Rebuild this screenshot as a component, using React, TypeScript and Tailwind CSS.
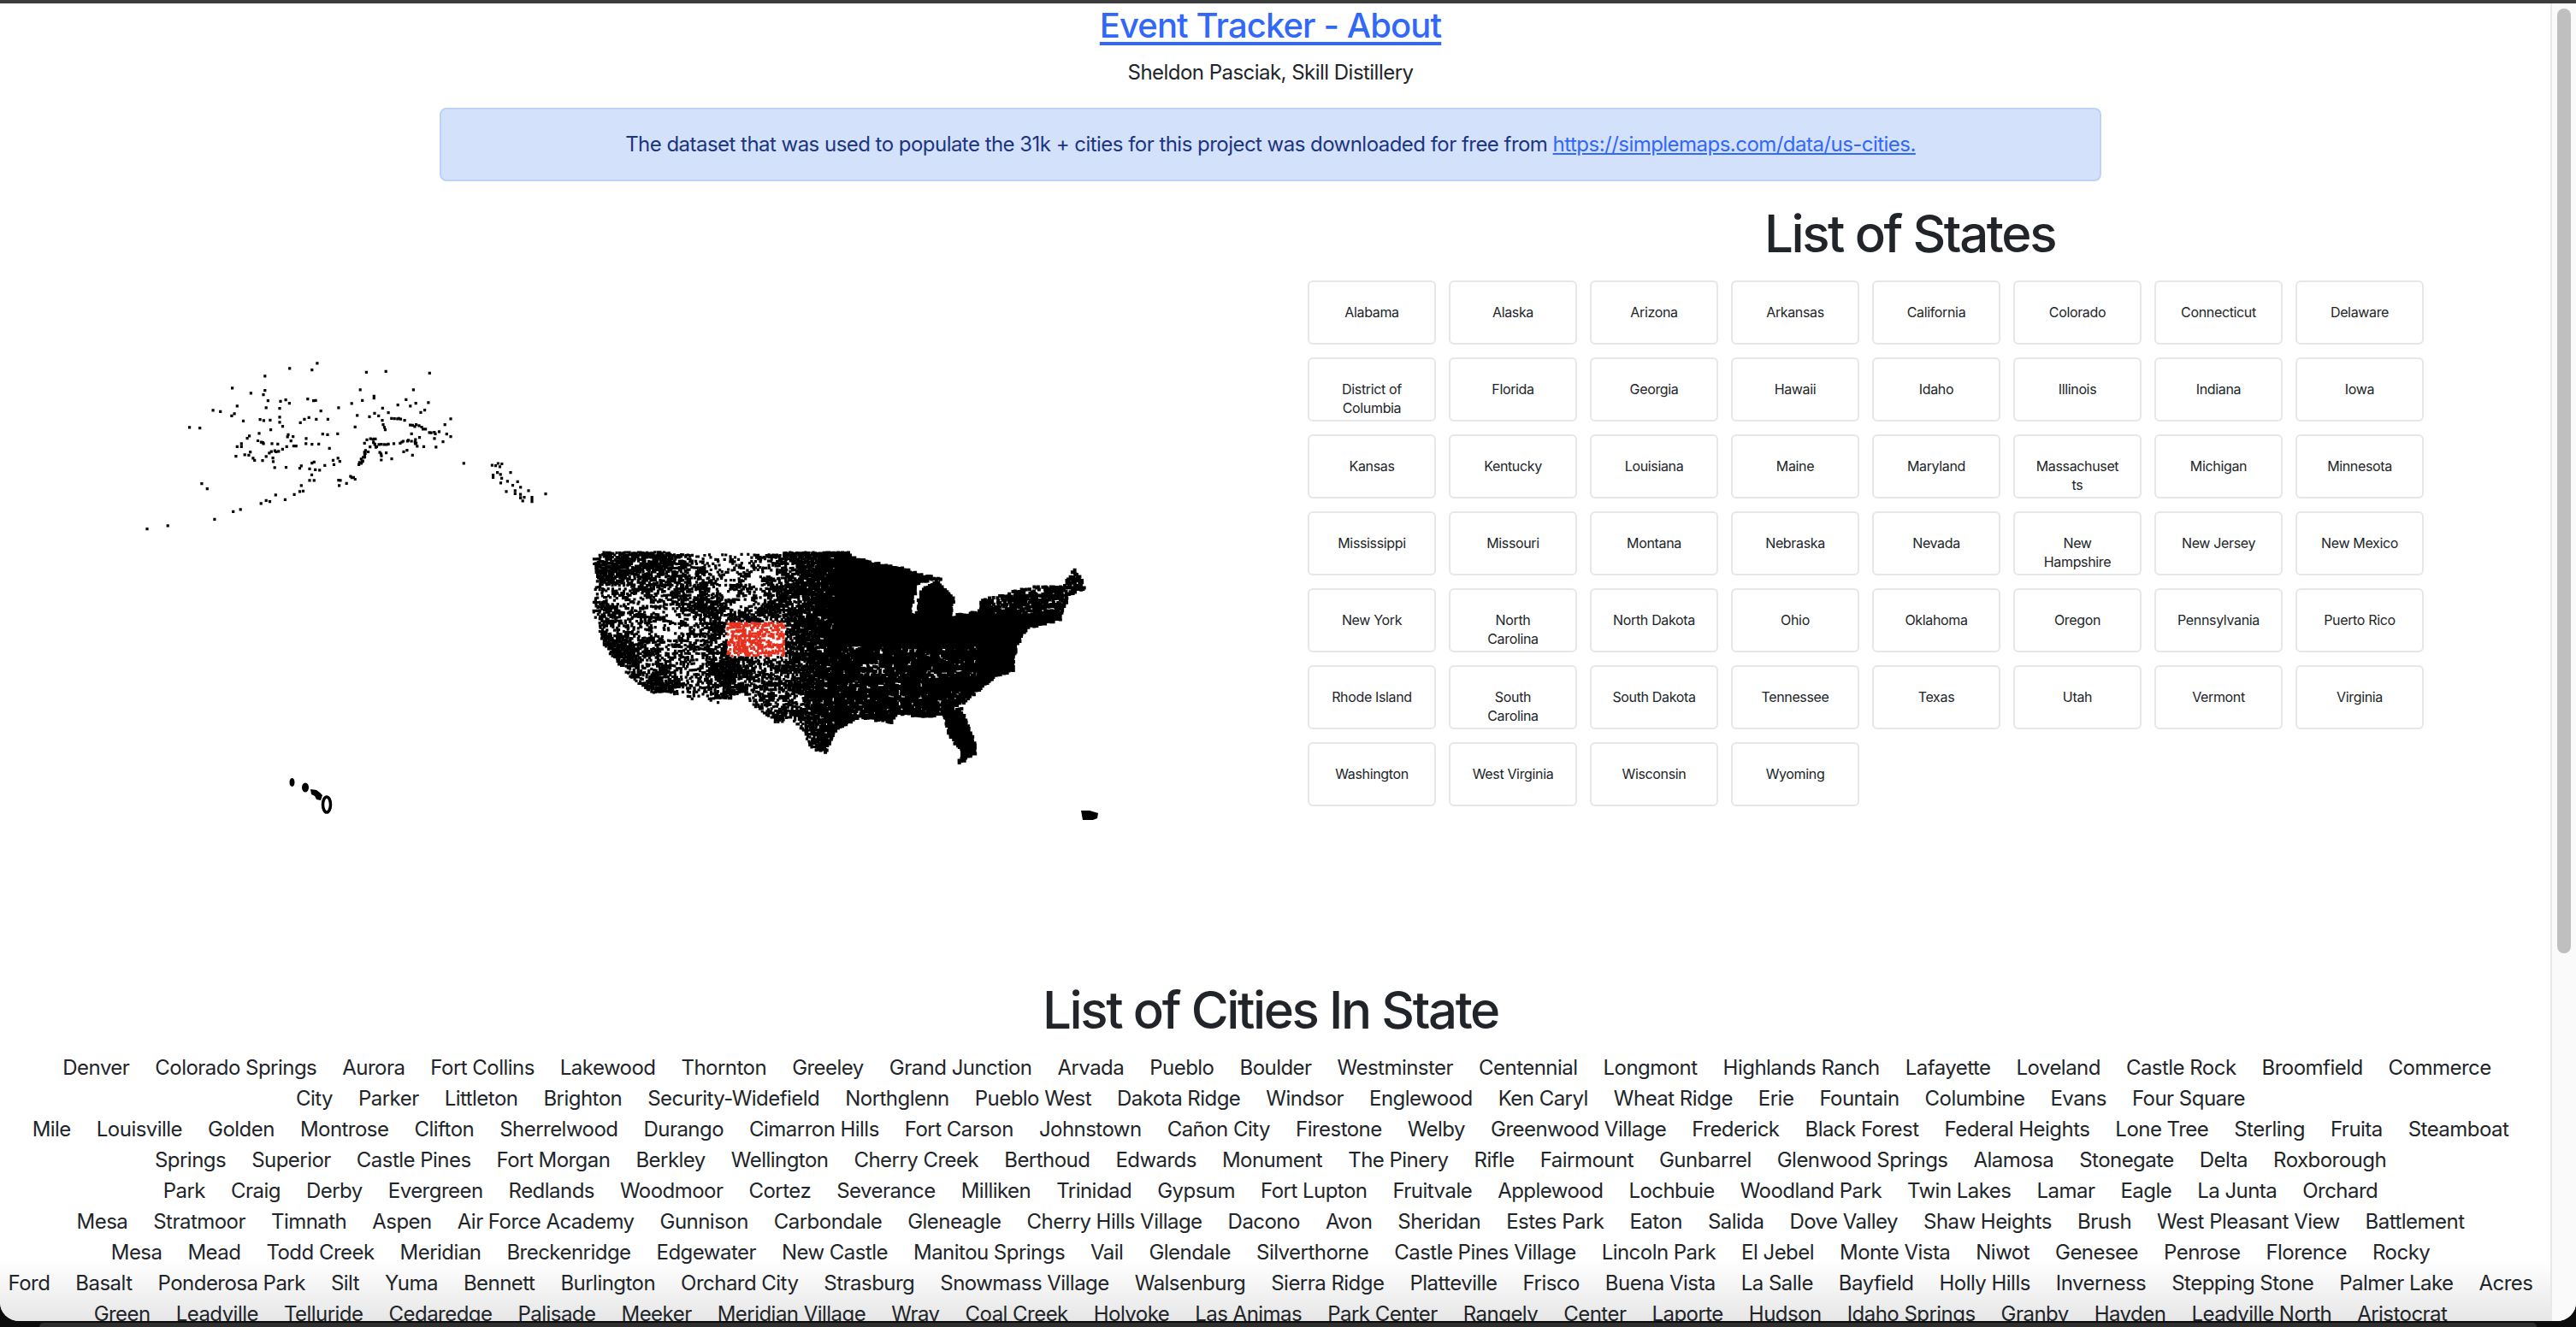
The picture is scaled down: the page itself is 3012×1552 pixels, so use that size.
import React from 'react';

const STATES = [
  'Alabama', 'Alaska', 'Arizona', 'Arkansas', 'California', 'Colorado', 'Connecticut', 'Delaware',
  'District of Columbia', 'Florida', 'Georgia', 'Hawaii', 'Idaho', 'Illinois', 'Indiana', 'Iowa',
  'Kansas', 'Kentucky', 'Louisiana', 'Maine', 'Maryland', 'Massachusetts', 'Michigan', 'Minnesota',
  'Mississippi', 'Missouri', 'Montana', 'Nebraska', 'Nevada', 'New Hampshire', 'New Jersey', 'New Mexico',
  'New York', 'North Carolina', 'North Dakota', 'Ohio', 'Oklahoma', 'Oregon', 'Pennsylvania', 'Puerto Rico',
  'Rhode Island', 'South Carolina', 'South Dakota', 'Tennessee', 'Texas', 'Utah', 'Vermont', 'Virginia',
  'Washington', 'West Virginia', 'Wisconsin', 'Wyoming',
];

const CITIES = [
  'Denver', 'Colorado Springs', 'Aurora', 'Fort Collins', 'Lakewood', 'Thornton', 'Greeley', 'Grand Junction', 'Arvada', 'Pueblo', 'Boulder', 'Westminster', 'Centennial', 'Longmont', 'Highlands Ranch', 'Lafayette', 'Loveland', 'Castle Rock', 'Broomfield', 'Commerce City',
  'Parker', 'Littleton', 'Brighton', 'Security-Widefield', 'Northglenn', 'Pueblo West', 'Dakota Ridge', 'Windsor', 'Englewood', 'Ken Caryl', 'Wheat Ridge', 'Erie', 'Fountain', 'Columbine', 'Evans', 'Four Square Mile',
  'Louisville', 'Golden', 'Montrose', 'Clifton', 'Sherrelwood', 'Durango', 'Cimarron Hills', 'Fort Carson', 'Johnstown', 'Cañon City', 'Firestone', 'Welby', 'Greenwood Village', 'Frederick', 'Black Forest', 'Federal Heights', 'Lone Tree', 'Sterling', 'Fruita', 'Steamboat Springs',
  'Superior', 'Castle Pines', 'Fort Morgan', 'Berkley', 'Wellington', 'Cherry Creek', 'Berthoud', 'Edwards', 'Monument', 'The Pinery', 'Rifle', 'Fairmount', 'Gunbarrel', 'Glenwood Springs', 'Alamosa', 'Stonegate', 'Delta', 'Roxborough Park',
  'Craig', 'Derby', 'Evergreen', 'Redlands', 'Woodmoor', 'Cortez', 'Severance', 'Milliken', 'Trinidad', 'Gypsum', 'Fort Lupton', 'Fruitvale', 'Applewood', 'Lochbuie', 'Woodland Park', 'Twin Lakes', 'Lamar', 'Eagle', 'La Junta', 'Orchard Mesa',
  'Stratmoor', 'Timnath', 'Aspen', 'Air Force Academy', 'Gunnison', 'Carbondale', 'Gleneagle', 'Cherry Hills Village', 'Dacono', 'Avon', 'Sheridan', 'Estes Park', 'Eaton', 'Salida', 'Dove Valley', 'Shaw Heights', 'Brush', 'West Pleasant View', 'Battlement Mesa',
  'Mead', 'Todd Creek', 'Meridian', 'Breckenridge', 'Edgewater', 'New Castle', 'Manitou Springs', 'Vail', 'Glendale', 'Silverthorne', 'Castle Pines Village', 'Lincoln Park', 'El Jebel', 'Monte Vista', 'Niwot', 'Genesee', 'Penrose', 'Florence', 'Rocky Ford',
  'Basalt', 'Ponderosa Park', 'Silt', 'Yuma', 'Bennett', 'Burlington', 'Orchard City', 'Strasburg', 'Snowmass Village', 'Walsenburg', 'Sierra Ridge', 'Platteville', 'Frisco', 'Buena Vista', 'La Salle', 'Bayfield', 'Holly Hills', 'Inverness', 'Stepping Stone', 'Palmer Lake', 'Acres Green',
  'Leadville', 'Telluride', 'Cedaredge', 'Palisade', 'Meeker', 'Meridian Village', 'Wray', 'Coal Creek', 'Holyoke', 'Las Animas', 'Park Center', 'Rangely', 'Center', 'Laporte', 'Hudson', 'Idaho Springs', 'Granby', 'Hayden', 'Leadville North', 'Aristocrat Ranchettes', 'Olathe', 'Kremmling', 'Lyons',
];

// outline of the lower 48, in the coordinates I read off the zoomed crop
const US: number[][] = [
  [75, 95], [115, 72], [150, 75], [300, 75], [500, 78], [740, 72], [800, 68], [830, 90], [905, 115], [960, 125], [1020, 150], [1075, 165], [1040, 172], [1005, 182],
  [985, 290], [1003, 290], [1015, 205], [1060, 172], [1110, 230], [1105, 295], [1180, 280], [1190, 240], [1260, 215], [1330, 195], [1420, 195],
  [1455, 125], [1490, 200], [1440, 225], [1415, 310], [1320, 340], [1290, 400], [1280, 490], [1230, 510], [1190, 550], [1130, 610],
  [1170, 740], [1170, 780], [1125, 815], [1130, 770], [1095, 710], [1080, 640], [1030, 650], [950, 640], [930, 670], [840, 650], [770, 700],
  [745, 775], [700, 760], [685, 710], [650, 665], [600, 670], [560, 630], [500, 570], [440, 610], [370, 590], [310, 570], [250, 570],
  [180, 510], [110, 400], [80, 310], [75, 250], [90, 170],
];

function inside(x: number, y: number) {
  let hit = false;
  for (let i = 0, j = US.length - 1; i < US.length; j = i++) {
    const [xi, yi] = US[i];
    const [xj, yj] = US[j];
    if (yi > y !== yj > y && x < ((xj - xi) * (y - yi)) / (yj - yi) + xi) hit = !hit;
  }
  return hit;
}

let seed = 20240;
function rand() {
  seed = (seed * 1664525 + 1013904223) % 4294967296;
  return seed / 4294967296;
}

function hash(a: number, b: number) {
  const s = Math.sin(a * 127.1 + b * 311.7) * 43758.5453;
  return s - Math.floor(s);
}

function noise(x: number, y: number) {
  const fx = Math.floor(x);
  const fy = Math.floor(y);
  const u = x - fx;
  const v = y - fy;
  const top = hash(fx, fy) * (1 - u) + hash(fx + 1, fy) * u;
  const bottom = hash(fx, fy + 1) * (1 - u) + hash(fx + 1, fy + 1) * u;
  return top * (1 - v) + bottom * v;
}

function blob(x: number, y: number, cx: number, cy: number, r: number) {
  const d = ((x - cx) * (x - cx) + (y - cy) * (y - cy)) / (r * r);
  return Math.exp(-d);
}

function density(x: number, y: number) {
  if (x > 720) {
    // solid, with little clusters of holes further south and in new england
    const speckled = (y > 400 && y < 640 && x < 1180) || (x > 1200 && y < 290) || x < 770;
    if (!speckled) return 1;
    const limit = x > 1200 && y < 290 ? 0.55 : 0.68;
    return noise(x / 9, y / 9) > limit ? 0.45 : 1;
  }
  const n = noise(x / 20, y / 20);
  let p = 0.14 + n * n * 1.25;
  p += 0.65 * blob(x, y, 115, 130, 60);
  p += 0.85 * blob(x, y, 150, 420, 70);
  p += 0.75 * blob(x, y, 270, 545, 50);
  p += 0.4 * blob(x, y, 400, 290, 50);
  p += 0.5 * blob(x, y, 480, 490, 90);
  p += 0.45 * blob(x, y, 250, 110, 110);
  p -= 0.2 * blob(x, y, 260, 320, 80);
  p -= 0.2 * blob(x, y, 520, 150, 70);
  p += Math.max(0, (x - 580) / 140) * 0.7;
  return p;
}

function buildMap() {
  let black = '';
  let red = '';
  const step = 2.5;
  for (let py = 640; py < 895; py += step) {
    for (let px = 685; px < 1275; px += step) {
      const x = (px - 660) * 2.45;
      const y = (py - 620) * 3;
      if (!inside(x, y)) continue;
      const jx = (px + rand() * 1.4 - 0.7).toFixed(1);
      const jy = (py + rand() * 1.4 - 0.7).toFixed(1);
      if (x > 458 + rand() * 14 && x < 630 && y > 318 && y < 440) {
        if (rand() < 0.22 + noise(x / 14, y / 12) * 0.95) red += `M${jx} ${jy}h3v3h-3z`;
      } else if (rand() < density(x, y)) {
        black += x > 720 ? `M${jx} ${jy}h4v4h-4z` : `M${jx} ${jy}h3.2v3.2h-3.2z`;
      }
    }
  }
  return { black, red };
}

const { black: usBlack, red: usRed } = buildMap();

const ALASKA_DOTS = [
  642, 70, 552, 88, 625, 93, 471, 115, 803, 101, 867, 98, 1010, 104, 364, 157, 471, 165, 425, 175, 466, 180, 783, 163, 957, 163, 481, 201, 522, 203,
  539, 198, 551, 210, 611, 195, 630, 201, 637, 200, 828, 185, 828, 192, 790, 200, 755, 211, 933, 197, 965, 210, 1006, 208, 906, 216, 947, 220, 380, 220,
  475, 226, 519, 228, 712, 226, 856, 227, 301, 235, 325, 239, 371, 247, 362, 254, 654, 237, 830, 245, 843, 254, 875, 243, 994, 234, 981, 242, 773, 253,
  813, 257, 519, 259, 615, 260, 600, 266, 587, 278, 639, 266, 677, 266, 455, 267, 467, 271, 488, 269, 400, 272, 519, 277, 529, 291, 1079, 265, 1060, 285,
  224, 295, 258, 297, 766, 293, 490, 303, 452, 316, 660, 318, 676, 320, 709, 317, 547, 320, 563, 327, 545, 328, 420, 325, 413, 333, 606, 334, 556, 342,
  1066, 318, 1079, 327, 1026, 334, 1054, 345, 1031, 364, 991, 362, 977, 330, 951, 317, 875, 353, 893, 352, 797, 350, 815, 363, 868, 384, 886, 405, 925, 380,
  936, 375, 954, 392, 380, 362, 394, 352, 394, 362, 494, 352, 513, 353, 605, 352, 625, 354, 647, 353, 542, 362, 565, 360, 573, 360, 682, 368, 376, 396,
  405, 391, 418, 392, 423, 381, 432, 403, 437, 410, 463, 411, 475, 397, 497, 402, 498, 415, 503, 436, 540, 435, 585, 438, 590, 430, 617, 440, 625, 420,
  632, 416, 636, 443, 650, 445, 667, 428, 694, 410, 697, 425, 710, 403, 716, 414, 624, 461, 617, 481, 632, 481, 712, 480, 718, 481, 738, 491, 714, 499,
  590, 499, 596, 518, 585, 520, 567, 530, 506, 532, 537, 548, 458, 562, 475, 551, 487, 555, 367, 590, 391, 583, 306, 617, 153, 640, 85, 651, 264, 492,
  282, 510, 1122, 421, 1240, 433, 1232, 453, 1242, 460, 1246, 473, 1243, 490, 1275, 453, 1265, 484, 1298, 485, 1282, 498, 1308, 505, 1261, 520, 1290, 517,
  1290, 527, 1334, 517, 1320, 540, 1390, 528, 1218, 462, 1218, 470, 1345, 540, 1345, 548, 1345, 555, 828, 335, 855, 270, 858, 285, 862, 295, 865, 303,
];

const ALASKA_CHAINS = [
  [885, 262, 925, 272], [945, 283, 1000, 300], [1010, 310, 1040, 313], [960, 342, 970, 358], [910, 350, 960, 342], [835, 358, 870, 358],
  [807, 335, 832, 335], [800, 375, 780, 428], [806, 380, 790, 420], [850, 380, 850, 405], [449, 345, 470, 350], [484, 381, 525, 376], [750, 465, 768, 480],
  [1218, 424, 1243, 427], [1305, 530, 1312, 550], [830, 345, 835, 365],
];

function alaskaPath() {
  let d = '';
  const dot = (zx: number, zy: number) => {
    const x = 140 + zx / 2.8;
    const y = 400 + zy / 3;
    d += `M${x.toFixed(1)} ${y.toFixed(1)}h3.2v3.2h-3.2z`;
  };
  for (let i = 0; i < ALASKA_DOTS.length; i += 2) dot(ALASKA_DOTS[i], ALASKA_DOTS[i + 1]);
  ALASKA_CHAINS.forEach(([x1, y1, x2, y2]) => {
    const n = Math.ceil(Math.hypot(x2 - x1, y2 - y1) / 9);
    for (let i = 0; i <= n; i++) {
      dot(x1 + ((x2 - x1) * i) / n + rand() * 8 - 4, y1 + ((y2 - y1) * i) / n + rand() * 10 - 5);
    }
  });
  return d;
}

function CityMap() {
  return (
    <svg viewBox="0 230 1514 770" className="block h-[770px] w-[1514px] blur-[0.5px]">
      <path d={alaskaPath()} fill="#000" />
      <path d={usBlack} fill="#000" />
      <path d={usRed} fill="#e8301f" />
      {/* hawaii */}
      <ellipse cx="341.5" cy="915" rx="3" ry="5" fill="#000" />
      <ellipse cx="357" cy="921" rx="4" ry="5.5" fill="#000" />
      <path d="M363 923l7 1 4 3 3 3 -2 6 -5 -1 -2 -4 -4 -2z" fill="#000" />
      <ellipse cx="382" cy="941" rx="4.5" ry="9" fill="none" stroke="#000" strokeWidth="3.5" />
      {/* puerto rico */}
      <path d="M1264 948l10 0 10 3 -1 6 -5 2 -12 0z" fill="#000" />
    </svg>
  );
}

function StateButton({ name }: { name: string }) {
  return (
    <button className="block h-[75px] w-[150px] cursor-pointer self-start rounded-[6px] border-2 border-[#e6e7e9] bg-white px-[23px] pt-[24px] text-center text-[16px] leading-[22px] tracking-[-0.35px] [overflow-wrap:anywhere] text-[#212529]">
      <span className="block h-full">{name}</span>
    </button>
  );
}

export default function App() {
  return (
    <div className="relative flex h-[1552px] w-[3012px] flex-col overflow-hidden bg-[#0c0c0c] font-['Inter',sans-serif] text-[24px] leading-[36px] tracking-[-0.53px] text-[#212529]">
      <div className="h-[4px] bg-[#3c3c3c]" />
      <div className="relative flex h-[1541px] overflow-hidden rounded-b-[22px] bg-white">
        <div className="pointer-events-none absolute inset-x-0 bottom-0 h-[70px] bg-gradient-to-b from-white/0 to-[#e6e6e6]" />
        <main className="relative w-[2971px] shrink-0 text-center">
          <h2 className="mt-[2px] text-[40px] leading-[48px] font-medium tracking-[-0.9px]">
            <a href="#" className="text-[#3268f8] underline decoration-[4px] underline-offset-[5px]">
              Event Tracker - About
            </a>
          </h2>
          <p className="mt-[13px]">Sheldon Pasciak, Skill Distillery</p>
          <div className="mx-auto mt-[23px] w-[1943px] rounded-[8px] border-2 border-[#bcd2f9] bg-[#d3e1fb] py-[23px] text-[#1c3580]">
            The dataset that was used to populate the 31k + cities for this project was downloaded for free from{' '}
            <a href="#" className="text-[#3268f8] underline">
              https://simplemaps.com/data/us-cities.
            </a>
          </div>
          <div className="mt-[18px] flex h-[915px]">
            <CityMap />
            <section className="w-[1438px] shrink-0">
              <h1 className="mt-[7px] text-[60px] leading-[72px] font-[550] tracking-[-2.4px]">List of States</h1>
              <div className="mt-[19px] ml-[15px] grid grid-cols-[repeat(8,150px)] gap-[15px]">
                {STATES.map((s) => (
                  <StateButton key={s} name={s} />
                ))}
              </div>
            </section>
          </div>
          <h1 className="text-[60px] leading-[72px] font-[550] tracking-[-2.4px]">List of Cities In State</h1>
          <div className="mt-[14px]">
            {/* no whitespace between the spans: lines only break inside a city name */}
            {CITIES.map((c) => (
              <span key={c} className="mx-[15px]">
                {c}
              </span>
            ))}
          </div>
        </main>
        <div className="relative ml-[11px] flex w-[30px] justify-center border-l-2 border-[#e8e8e8] bg-[#fafafa] pt-[6px]">
          <div className="h-[1105px] w-[16px] rounded-full bg-[#bfbfbf]" />
        </div>
      </div>
      <div className="mx-[46px] mt-[2px] h-[5px] rounded-t-[12px] bg-[#2e2e2e]" />
    </div>
  );
}
